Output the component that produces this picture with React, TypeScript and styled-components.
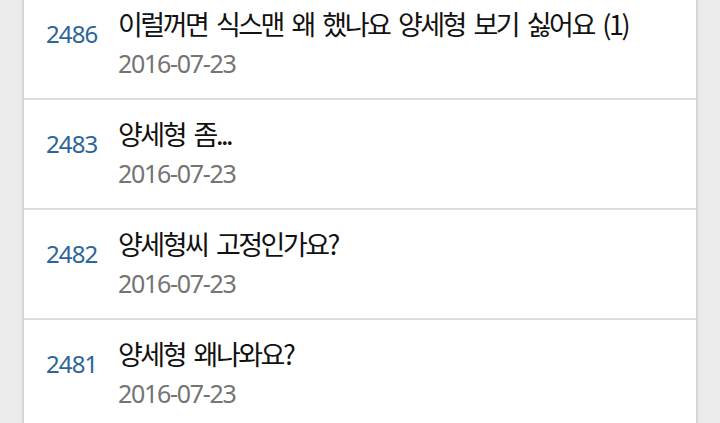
import * as React from 'react';
import styled, {createGlobalStyle} from 'styled-components';

type Post = {
  no: number;
  title: string;
  date: string;
};

const posts: Post[] = [
  {no: 2486, title: '이럴꺼면 식스맨 왜 했나요 양세형 보기 싫어요 (1)', date: '2016-07-23'},
  {no: 2483, title: '양세형 좀...', date: '2016-07-23'},
  {no: 2482, title: '양세형씨 고정인가요?', date: '2016-07-23'},
  {no: 2481, title: '양세형 왜나와요?', date: '2016-07-23'},
];

const GlobalStyle = createGlobalStyle`
  html, body {
    margin: 0;
    padding: 0;
    background: #ebebeb;
    overflow: hidden;
  }
  body {
    font-family: "Noto Sans CJK KR", "Noto Sans", sans-serif;
  }
`;

const Page = styled.div`
  height: 423px;
  padding: 0 22px;
  overflow: hidden;
`;

const List = styled.ul`
  list-style: none;
  margin: -10px 0 0;
  padding: 0;
  background: #fff;
  border-left: 2px solid #d6d6d6;
  border-right: 2px solid #d6d6d6;
`;

const Row = styled.li`
  display: grid;
  grid-template-columns: 94px 1fr;
  height: 108px;
  border-bottom: 2px solid #dcdcdc;
`;

const Num = styled.span`
  padding: 29px 0 0 22px;
  font-family: "Noto Sans", "Open Sans", sans-serif;
  font-size: 24px;
  line-height: 30px;
  letter-spacing: -0.9px;
  color: #2c6599;
`;

const Body = styled.div`
  display: flex;
  flex-direction: column;
  padding-top: 16px;
`;

const Title = styled.span`
  font-size: 27px;
  line-height: 36px;
  letter-spacing: -2.5px;
  word-spacing: 5px;
  color: #111;
  white-space: nowrap;
`;

const Date = styled.span`
  margin-top: 6px;
  font-family: "Noto Sans", "Open Sans", sans-serif;
  font-size: 25px;
  line-height: 30px;
  letter-spacing: -1.3px;
  color: #747474;
`;

export default function App() {
  return (
    <>
      <GlobalStyle/>
      <Page>
        <List>
          {posts.map(p => (
            <Row key={p.no}>
              <Num>{p.no}</Num>
              <Body>
                <Title>{p.title}</Title>
                <Date>{p.date}</Date>
              </Body>
            </Row>
          ))}
        </List>
      </Page>
    </>
  );
}
